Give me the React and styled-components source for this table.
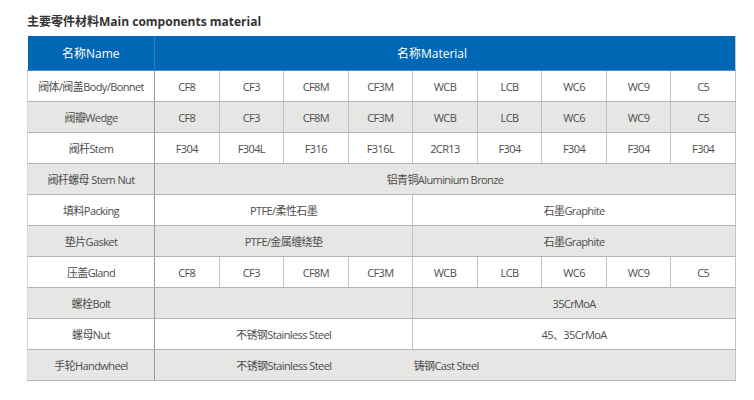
import React from 'react';
import styled, { createGlobalStyle } from 'styled-components';

const GlobalStyle = createGlobalStyle`
  html, body { margin: 0; padding: 0; background: #fff; }
  body { font-family: "Open Sans", "Noto Sans CJK SC", sans-serif; }
`;

const grades = ['CF8', 'CF3', 'CF8M', 'CF3M', 'WCB', 'LCB', 'WC6', 'WC9', 'C5'];
const stems = ['F304', 'F304L', 'F316', 'F316L', '2CR13', 'F304', 'F304', 'F304', 'F304'];

// each row: name + cells [{ text, span, joined }]
const rows = [
  { name: '阀体/阀盖Body/Bonnet', cells: grades.map((g) => ({ text: g })) },
  { name: '阀瓣Wedge', cells: grades.map((g) => ({ text: g })) },
  { name: '阀杆Stem', cells: stems.map((g) => ({ text: g })) },
  { name: '阀杆螺母 Stem Nut', cells: [{ text: '铝青铜Aluminium Bronze', span: 9 }] },
  { name: '填料Packing', cells: [{ text: 'PTFE/柔性石墨', span: 4 }, { text: '石墨Graphite', span: 5 }] },
  { name: '垫片Gasket', cells: [{ text: 'PTFE/金属缠绕垫', span: 4 }, { text: '石墨Graphite', span: 5 }] },
  { name: '压盖Gland', cells: grades.map((g) => ({ text: g })) },
  { name: '螺栓Bolt', cells: [{ text: '', span: 4 }, { text: '35CrMoA', span: 5 }] },
  { name: '螺母Nut', cells: [{ text: '不锈钢Stainless Steel', span: 4 }, { text: '45、35CrMoA', span: 5 }] },
  { name: '手轮Handwheel', cells: [{ text: '不锈钢Stainless Steel', span: 4 }, { text: '铸钢Cast Steel', span: 5, joined: true }] },
];

export default function App() {
  return (
    <>
      <GlobalStyle />
      <Page>
        <Title>主要零件材料Main components material</Title>
        <Table>
          <colgroup>
            <col style={{ width: 127 }} />
            {grades.map((g, i) => <col key={i} />)}
          </colgroup>
          <thead>
            <tr>
              <Th>名称Name</Th>
              <Th colSpan={9} $offset>名称Material</Th>
            </tr>
          </thead>
          <tbody>
            {rows.map((row, i) => (
              <Row key={i} $shaded={i % 2 === 1}>
                <NameCell>{row.name}</NameCell>
                {row.cells.map((c, j) => (
                  <Td key={j} colSpan={c.span || 1} $joined={c.joined}>{c.text}</Td>
                ))}
              </Row>
            ))}
          </tbody>
        </Table>
      </Page>
    </>
  );
}

const Page = styled.div`
  padding: 14px 0 0 27px;
`
const Title = styled.h2`
  margin: 0 0 6px;
  font-size: 12px;
  line-height: 16px;
  font-weight: 700;
  color: #333;
`
const Table = styled.table`
  width: 709px;
  table-layout: fixed;
  border-collapse: collapse;
  border-right: 1px solid #c4c4c4;
  border-bottom: 1px solid #cfcfcf;
`
const Th = styled.th`
  height: 34px;
  padding: 0 ${({ $offset }) => ($offset ? '26px' : '0')} 0 0;
  background: #0067b4;
  color: #fff;
  font-size: 12px;
  font-weight: 400;
  text-align: center;
  border-left: 1px solid #2b7cc2;
  border-bottom: 1px solid #4a8fce;
  &:first-child { border-left: none; }
`
const Row = styled.tr`
  background: ${({ $shaded }) => ($shaded ? '#e6e6e4' : '#fff')};
`
const Td = styled.td`
  height: 30px;
  padding: 0 ${({ $joined }) => ($joined ? '1px' : '0')};
  font-size: 11px;
  color: #4d4d4d;
  letter-spacing: -0.6px;
  text-align: ${({ $joined }) => ($joined ? 'left' : 'center')};
  white-space: nowrap;
  border-bottom: 1px solid #b4b4b4;
  border-left: ${({ $joined }) => ($joined ? 'hidden' : '1px solid #c2c2c2')};
`
const NameCell = styled(Td)`
  border-left: 1px solid #d8d8d8;
  border-right: 1px solid #9a9a9a;
`
